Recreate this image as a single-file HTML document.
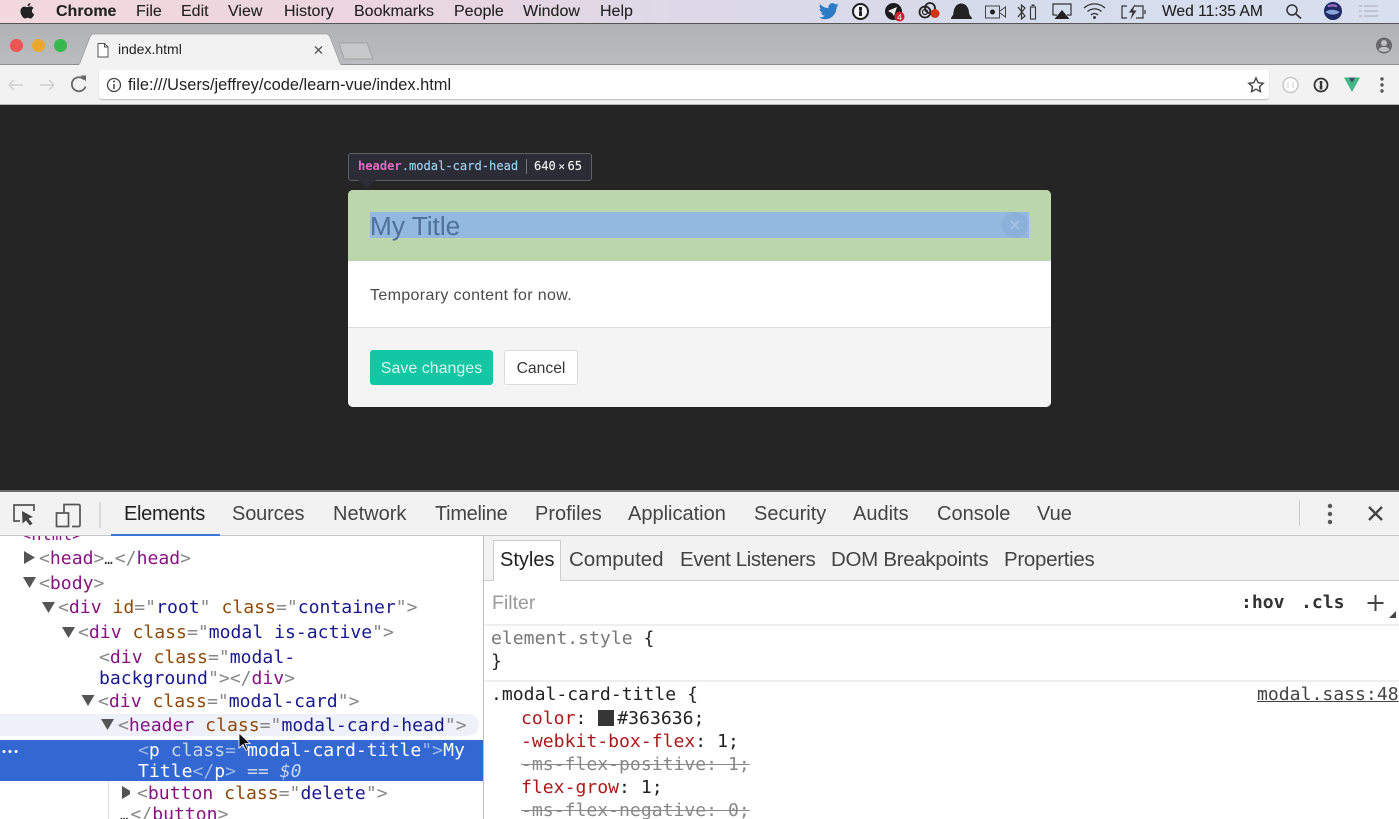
<!DOCTYPE html>
<html><head><meta charset="utf-8"><style>
html,body{margin:0;padding:0;width:1399px;height:819px;overflow:hidden;background:#fff}
body{position:relative;font-family:"Liberation Sans",sans-serif}
.a{position:absolute}
.t{position:absolute;white-space:pre;line-height:1}
.m{font-family:"DejaVu Sans Mono",monospace;font-size:18.1px;color:#881280}
.mi{position:absolute;top:3px;font-size:16px;color:#222;white-space:pre;line-height:18px;-webkit-text-stroke:.1px #222}
.tab{position:absolute;top:504px;font-size:20px;color:#444;line-height:20px;white-space:pre}
.st{position:absolute;top:550px;font-size:20.500px;color:#444;line-height:20px;white-space:pre}
.b{color:#18188f}.o{color:#8f4a08}.g{color:#888}
i{font-style:normal}
.e{display:inline-block;width:10.400px;color:#333;font-size:14px;letter-spacing:-1px}
.k{color:#ab1a1a}.s{color:#888;text-decoration:line-through}.c{color:#222}
</style></head><body>

<!-- menu bar -->
<div class="a" style="left:0;top:0;width:1399px;height:23px;background:linear-gradient(90deg,#f3d9de 0,#ecd5de 25%,#dcd8e8 50%,#d5dcec 75%,#d8dfee 100%)"></div>
<div class="a" style="left:0;top:23px;width:1399px;height:1px;background:#555"></div>
<svg class="a" style="left:18px;top:2px" width="18" height="19" viewBox="0 0 18 19"><path d="M12.5 1c.1 1.5-1.3 3.2-3 3.1C9.300 2.600 11 1.100 12.500 1zM9.300 5.200c.8 0 1.800-.8 3.200-.8 1.100 0 2.400.6 3.100 1.700-2.600 1.500-2.100 5 .6 6.100-.7 1.800-2.200 4.300-3.700 4.300-1 0-1.500-.7-2.800-.7s-1.900.7-2.800.7c-1.900 0-4.400-4-4.400-7.200 0-3 1.900-4.700 3.800-4.700 1.300 0 2.200.6 3 .6z" fill="#222"/></svg>
<div class="mi" style="left:56px;font-weight:bold;font-size:16px">Chrome</div>
<div class="mi" style="left:136px">File</div>
<div class="mi" style="left:181px">Edit</div>
<div class="mi" style="left:228px">View</div>
<div class="mi" style="left:284px">History</div>
<div class="mi" style="left:354px">Bookmarks</div>
<div class="mi" style="left:454px">People</div>
<div class="mi" style="left:523px">Window</div>
<div class="mi" style="left:600px">Help</div>

<!-- status icons -->
<svg class="a" style="left:816px;top:0" width="583" height="23" viewBox="816 0 583 23">
<path transform="translate(0 -2)" d="M819 5c3 3.500 6 5 9.500 5.200-.6-3 2-5.500 4.500-5 1.100 0 2 .5 2.700 1.200 1-.2 1.800-.5 2.500-1-.3 1-1 1.800-1.800 2.300.8-.1 1.600-.3 2.200-.6-.5.800-1.200 1.500-2 2.100 0 5.800-4.500 12-11.500 12-2.300 0-4.400-.7-6.200-1.800 2.200.2 4.300-.4 6-1.700-1.800 0-3.300-1.200-3.800-2.800.6.100 1.200.1 1.800-.1-1.900-.4-3.300-2.100-3.300-4 .6.300 1.200.5 1.800.5-1.800-1.300-2.300-3.700-1.200-5.600z" fill="#2a7dc4"/>
<circle cx="860.500" cy="11.500" r="7.500" fill="#f4f4f6" stroke="#222" stroke-width="2"/><path d="M859 7h3v3l-.5 1 .5 1v4h-3v-4l.5-1-.5-1z" fill="#222"/>
<circle cx="893.500" cy="11.500" r="8.500" fill="#1b1b1f"/><path d="M888 11l9-4-3 9-2-3z" fill="#eee"/><circle cx="899.500" cy="16.500" r="5" fill="#d02030"/><text x="897.200" y="20" font-size="8.500" fill="#fff" font-family="Liberation Sans">4</text>
<circle cx="925" cy="12" r="5.500" fill="none" stroke="#222" stroke-width="1.800"/><circle cx="930" cy="8" r="5" fill="none" stroke="#222" stroke-width="1.800"/><circle cx="925" cy="12" r="2.500" fill="none" stroke="#222" stroke-width="1.200"/><circle cx="935" cy="13.500" r="4.500" fill="#d8330f"/>
<path d="M951 19c0-2.500 2-3 2.300-5 .5-3 .3-4.500 2-7 1.500-2.500 3.700-3.500 6-3.500s4.500 1 6 3.500c1.700 2.500 1.500 4 2 7 .3 2 2.700 2.500 2.700 5z" fill="#222"/>
<path d="M985.500 6h14v12h-14z" fill="none" stroke="#444" stroke-width="1"/><path d="M1000 11l5.500-4v10l-5.500-4" fill="none" stroke="#444" stroke-width="1"/><circle cx="992.500" cy="12" r="2.500" fill="#222"/>
<path d="M1018 7l7 9-3.500 3v-14l3.500 3-7 9" fill="none" stroke="#333" stroke-width="1.200"/><rect x="1030.500" y="7" width="5" height="12" fill="none" stroke="#333" stroke-width="1.100"/><rect x="1031.500" y="4.500" width="3" height="1.500" fill="#333"/>
<path d="M1057 15h-4V4h18v11h-4" fill="none" stroke="#333" stroke-width="1.200"/><path d="M1062 10l7.500 9h-15z" fill="#222"/>
<path d="M1084 8c6-5.500 15-5.500 21 0M1087.500 11.500c4-3.500 10-3.500 14 0M1091 15c2-2 5-2 7 0" fill="none" stroke="#333" stroke-width="1.300"/><circle cx="1094.500" cy="17.500" r="1.400" fill="#222"/>
<path d="M1127 6h-5v12h5M1134 6h9v12h-7M1145 10v4" fill="none" stroke="#333" stroke-width="1.200"/><path d="M1135 4l-6 8.500h3.500l-2 7 6-9h-3.500z" fill="#333"/>
<circle cx="1292" cy="10" r="5" fill="none" stroke="#333" stroke-width="1.500"/><path d="M1296 14l5 4.500" stroke="#333" stroke-width="1.800"/>
<circle cx="1333" cy="11" r="9" fill="#1d2a63"/><path d="M1325.500 12c3-3 10-3 14 0-3 3.500-10 3.500-14 0z" fill="#8aa6d8"/><path d="M1328 6.500c2-1.500 6-1.500 9 0" stroke="#a06dc0" stroke-width="2.200" fill="none"/>
<path d="M1359 6h3M1364 6h14M1359 11h3M1364 11h14M1359 16h3M1364 16h14" stroke="#b8bcc9" stroke-width="1.600"/>
</svg>
<div class="mi" style="left:1162px;color:#222;font-size:15.600px">Wed 11:35 AM</div>

<!-- tab strip -->
<div class="a" style="left:0;top:24px;width:1399px;height:41px;background:linear-gradient(#b1b2b4,#bbbcbf)"></div>
<div class="a" style="left:0;top:64px;width:1399px;height:1px;background:#8f8f91"></div>
<div class="a" style="left:10px;top:39px;width:13px;height:13px;border-radius:50%;background:#ee5552"></div>
<div class="a" style="left:32px;top:39px;width:13px;height:13px;border-radius:50%;background:#eaa92c"></div>
<div class="a" style="left:54px;top:39px;width:13px;height:13px;border-radius:50%;background:#35b84c"></div>
<svg class="a" style="left:70px;top:30px" width="320" height="36" viewBox="70 30 320 36">
<path d="M76 66c2 0 3-1 4-3L90 37c1-2 2-3 4-3h232c2 0 3 1 4 3l10 26c1 2 2 3 4 3z" fill="#f2f2f3" stroke="#a0a0a2" stroke-width=".8"/>
<path d="M339 43h28l6 16h-29z" fill="#c6c7c9" stroke="#a2a2a4" stroke-width="1"/>
<path d="M98 43.500h6.500l3.500 3.500v10H98z M104.500 43.500V47h3.500" fill="#fff" stroke="#555" stroke-width="1"/>
<path d="M315 46.500l7 7M322 46.500l-7 7" stroke="#555" stroke-width="1.300"/>
</svg>
<div class="a" style="left:118px;top:41px;font-size:14px;color:#222;line-height:16px">index.html</div>
<svg class="a" style="left:1373px;top:35px" width="22" height="22" viewBox="0 0 22 22"><circle cx="11" cy="10.500" r="8" fill="#68686b"/><circle cx="11" cy="8" r="3" fill="#c0c1c3"/><path d="M5.500 15c1-2.500 3-3 5.500-3s4.500.5 5.500 3c-3 2.500-8 2.500-11 0z" fill="#c0c1c3"/></svg>

<!-- toolbar -->
<div class="a" style="left:0;top:65px;width:1399px;height:40px;background:#f2f2f2"></div>
<div class="a" style="left:0;top:104px;width:1399px;height:1px;background:#b4b4b4"></div>
<div class="a" style="left:99px;top:70px;width:1170px;height:29px;background:#fff;border-radius:3px;box-shadow:0 1px 1px #bbb"></div>
<svg class="a" style="left:0;top:65px" width="130" height="40" viewBox="0 0 130 40">
<path d="M9 20h14M9 20l5-5M9 20l5 5M40 20h14M54 20l-5-5M54 20l-5 5" fill="none" stroke="#cfcfcf" stroke-width="1.500"/>
<path d="M84 14.500a7 7 0 1 0 1.500 7" fill="none" stroke="#666" stroke-width="1.800"/><path d="M80.500 10.500h5.500v6z" fill="#666"/>
<circle cx="114" cy="20" r="6.500" fill="none" stroke="#444" stroke-width="1.300"/><path d="M114 19v5" stroke="#444" stroke-width="1.500"/><circle cx="114" cy="16.500" r="1" fill="#444"/>
</svg>
<div class="a" style="left:128px;top:77px;font-size:16.400px;color:#222;line-height:17px;white-space:pre">file:///Users/jeffrey/code/learn-vue/index.html</div>
<svg class="a" style="left:1240px;top:70px" width="159" height="30" viewBox="1240 70 159 30">
<path d="M1256 78l2.200 4.700 5 .6-3.700 3.400 1 5-4.500-2.500-4.500 2.500 1-5-3.700-3.400 5-.6z" fill="none" stroke="#444" stroke-width="1.400"/>
<circle cx="1290.500" cy="85" r="7.500" fill="#fff" stroke="#c8c8c8" stroke-width="1.500"/><path d="M1288 82v6M1293 82v6" stroke="#ccc" stroke-width="1"/>
<circle cx="1321" cy="85" r="6.500" fill="#eee" stroke="#333" stroke-width="1.800"/><path d="M1319.700 81h2.600v2.500l-.4 1 .4 1v4h-2.600v-4l.4-1-.4-1z" fill="#333"/>
<path d="M1344 77.500h5l3 5.500 3-5.500h5l-8 14.500z" fill="#41b883"/><path d="M1349 77.500h2.500l.5 1 .5-1h2.500l-3 5.500z" fill="#35495e"/>
<circle cx="1382" cy="79" r="1.700" fill="#555"/><circle cx="1382" cy="85" r="1.700" fill="#555"/><circle cx="1382" cy="91" r="1.700" fill="#555"/>
</svg>

<!-- page -->
<div class="a" style="left:0;top:105px;width:1399px;height:386px;background:#252525"></div>
<!-- modal -->
<div class="a" style="left:348px;top:190px;width:703px;height:217px;border-radius:5px;overflow:hidden;background:#fff">
 <div class="a" style="left:0;top:0;width:703px;height:71px;background:#bbd6aa"></div>
 <div class="a" style="left:22px;top:22px;width:659px;height:26px;background:#93b9e0"></div>
 <div class="a" style="left:654px;top:22px;width:26px;height:26px;border-radius:50%;background:#8bb0da"></div>
 <svg class="a" style="left:654px;top:22px" width="26" height="26"><path d="M9 9l8 8M17 9l-8 8" stroke="#a3c2e4" stroke-width="2"/></svg>
 <div class="a" style="left:22px;top:20px;font-size:26.200px;line-height:32px;color:#4f719c;white-space:pre">My Title</div>
 <div class="a" style="left:0;top:71px;width:703px;height:66px;background:#fff"></div>
 <div class="a" style="left:22px;top:97px;font-size:16px;line-height:17px;color:#4a4a4a;letter-spacing:.35px;white-space:pre">Temporary content for now.</div>
 <div class="a" style="left:0;top:137px;width:703px;height:80px;background:#f4f4f4;border-top:1px solid #dbdbdb;box-sizing:border-box"></div>
 <div class="a" style="left:22px;top:160px;width:123px;height:35px;background:#13c7a4;border-radius:3px;color:#d8f6ef;font-size:16px;line-height:37px;text-align:center">Save changes</div>
 <div class="a" style="left:156px;top:160px;width:74px;height:35px;box-sizing:border-box;background:#fff;border:1px solid #dbdbdb;border-radius:3px;color:#363636;font-size:15.700px;line-height:35px;text-align:center">Cancel</div>
</div>
<!-- tooltip -->
<div class="a" style="left:348px;top:153px;width:244px;height:28px;box-sizing:border-box;background:#2b2c36;border:1px solid #5d5e66;border-radius:3px"></div>
<svg class="a" style="left:358px;top:180px" width="20" height="10"><path d="M0 0h18l-9 8z" fill="#2b2c36"/></svg>
<div class="a" style="left:358px;top:158px;font-family:'DejaVu Sans Mono',monospace;font-size:12.100px;line-height:16px;color:#9ed0f0;white-space:pre;-webkit-text-stroke:.15px #9ed0f0"><span style="color:#e66ac6;font-weight:bold;-webkit-text-stroke:0">header</span>.modal-card-head</div>
<div class="a" style="left:526px;top:159px;width:1px;height:15px;background:#777"></div>
<div class="a" style="left:534px;top:158px;font-family:'DejaVu Sans Mono',monospace;font-size:12.100px;line-height:16px;color:#eee;white-space:pre;-webkit-text-stroke:.15px #eee">640<span style="font-size:11px;margin:0 2.500px 0 2.500px">×</span>65</div>

<!-- devtools -->
<div class="a" style="left:0;top:490px;width:1399px;height:2px;background:#6a6a6a"></div>
<div class="a" style="left:0;top:492px;width:1399px;height:44px;background:#f2f2f2;border-bottom:1px solid #c6c6c6;box-sizing:border-box"></div>
<svg class="a" style="left:0;top:492px" width="110" height="44" viewBox="0 0 110 44">
<path d="M20 29h-6V13h20v6" fill="none" stroke="#555" stroke-width="1.700"/><path d="M22 19l11 6-4.500 1.500 4 5-2.500 2-4-5-3.500 3z" fill="#444"/>
<path d="M64 21V12.500h14.500c1 0 1.500.5 1.500 1.500v19c0 .8-.5 1.500-1.500 1.500H72" fill="none" stroke="#555" stroke-width="1.700"/><rect x="56.500" y="21" width="12" height="13.500" fill="none" stroke="#555" stroke-width="1.700"/>
<path d="M100 10v26" stroke="#ccc" stroke-width="1.200"/>
</svg>
<div class="a" style="left:111px;top:534px;width:109px;height:2px;background:#3c78d8"></div>
<div class="tab" style="left:124px;color:#222;letter-spacing:-.3px">Elements</div>
<div class="tab" style="left:232px;letter-spacing:-.15px">Sources</div>
<div class="tab" style="left:333px">Network</div>
<div class="tab" style="left:435px;letter-spacing:-.3px">Timeline</div>
<div class="tab" style="left:535px">Profiles</div>
<div class="tab" style="left:628px">Application</div>
<div class="tab" style="left:754px">Security</div>
<div class="tab" style="left:853px">Audits</div>
<div class="tab" style="left:937px">Console</div>
<div class="tab" style="left:1037px">Vue</div>
<svg class="a" style="left:1290px;top:492px" width="109" height="44" viewBox="1290 492 109 44">
<path d="M1299.500 500v26" stroke="#ccc" stroke-width="1"/>
<circle cx="1330" cy="506" r="2.200" fill="#555"/><circle cx="1330" cy="514" r="2.200" fill="#555"/><circle cx="1330" cy="522" r="2.200" fill="#555"/>
<path d="M1369 507l13 13M1382 507l-13 13" stroke="#444" stroke-width="2.400"/>
</svg>

<!-- DOM tree -->
<div class="a" style="left:0;top:536px;width:483px;height:283px;background:#fff;overflow:hidden">
 <div class="t m" style="left:21px;top:-9px;font-size:17px">&lt;html&gt;</div>
</div>
<div class="a" style="left:0;top:714px;width:479px;height:22px;background:#eef1f9;border-radius:0 11px 11px 0"></div>
<div class="a" style="left:0;top:740px;width:483px;height:41px;background:#3367d1"></div>
<div class="a" style="left:108px;top:781px;width:1px;height:38px;background:#e2e2e2"></div>

<svg class="a" style="left:0;top:536px" width="130" height="283" viewBox="0 536 130 283">
<g fill="#555">
<path d="M24 551l11 6.500-11 6.500z"/><path d="M23 577h13l-6.500 11z"/>
<path d="M42 602h13l-6.500 11z"/><path d="M62 627h13l-6.500 11z"/>
<path d="M81.500 695h13l-6.500 11z"/><path d="M101 719h13l-6.500 11z"/>
<path d="M122 786l11 6.500-11 6.500z"/>
</g></svg>

<div class="t m" style="left:39px;top:550px"><i class="g">&lt;</i>head<i class="g">&gt;</i><span class="e">…</span><i class="g">&lt;/</i>head<i class="g">&gt;</i></div>
<div class="t m" style="left:39px;top:575px"><i class="g">&lt;</i>body<i class="g">&gt;</i></div>
<div class="t m" style="left:58px;top:599px"><i class="g">&lt;</i>div <i class="o">id</i><i class="g">="</i><i class="b">root</i><i class="g">"</i> <i class="o">class</i><i class="g">="</i><i class="b">container</i><i class="g">"&gt;</i></div>
<div class="t m" style="left:78px;top:624px"><i class="g">&lt;</i>div <i class="o">class</i><i class="g">="</i><i class="b">modal is-active</i><i class="g">"&gt;</i></div>
<div class="t m" style="left:99px;top:649px"><i class="g">&lt;</i>div <i class="o">class</i><i class="g">="</i><i class="b">modal-</i></div>
<div class="t m" style="left:99px;top:670px"><i class="b">background</i><i class="g">"&gt;&lt;/</i>div<i class="g">&gt;</i></div>
<div class="t m" style="left:98px;top:693px"><i class="g">&lt;</i>div <i class="o">class</i><i class="g">="</i><i class="b">modal-card</i><i class="g">"&gt;</i></div>
<div class="t m" style="left:118px;top:717px"><i class="g">&lt;</i>header <i class="o">class</i><i class="g">="</i><i class="b">modal-card-head</i><i class="g">"&gt;</i></div>
<div class="t m" style="left:138px;top:742px;color:#fff"><i style="color:#9db8ea">&lt;</i>p <i style="color:#c8d6f2">class</i><i style="color:#9db8ea">="</i>modal-card-title<i style="color:#9db8ea">"&gt;</i>My</div>
<div class="t m" style="left:138px;top:763px;color:#fff">Title<i style="color:#9db8ea">&lt;/</i>p<i style="color:#9db8ea">&gt;</i> <i style="color:#c8d6f2">==</i> <i style="color:#c8d6f2;font-style:italic">$0</i></div>
<div class="t m" style="left:137px;top:785px"><i class="g">&lt;</i>button <i class="o">class</i><i class="g">="</i><i class="b">delete</i><i class="g">"&gt;</i></div>
<div class="t m" style="left:120px;top:806px"><span class="e">…</span><i class="g">&lt;/</i>button<i class="g">&gt;</i></div>
<div class="a" style="left:1px;top:750px;width:17px;height:3px;background:radial-gradient(circle,#fff 1.400px,transparent 1.600px) 0 0/6px 3px repeat-x"></div>
<svg class="a" style="left:238px;top:732px" width="14" height="20"><path d="M1 1v15l4-3.500 3 6 2-1-3-6h5z" fill="#111" stroke="#fff" stroke-width=".8"/></svg>

<!-- styles pane -->
<div class="a" style="left:483px;top:536px;width:1px;height:283px;background:#bdbdbd"></div>
<div class="a" style="left:484px;top:536px;width:915px;height:45px;background:#f2f2f2;border-bottom:1px solid #cfcfcf;box-sizing:border-box"></div>
<div class="a" style="left:493px;top:540px;width:68px;height:41px;background:#fff;border:1px solid #ccc;border-bottom:none;box-sizing:border-box"></div>
<div class="st" style="left:500px;color:#222;font-size:20px">Styles</div>
<div class="st" style="left:569px">Computed</div>
<div class="st" style="left:680px;letter-spacing:-.4px">Event Listeners</div>
<div class="st" style="left:831px;letter-spacing:-.3px">DOM Breakpoints</div>
<div class="st" style="left:1004px;letter-spacing:-.3px">Properties</div>
<div class="a" style="left:492px;top:593px;font-size:19.500px;line-height:20px;color:#9a9a9a">Filter</div>
<div class="t m" style="left:1241px;top:594px;color:#333;font-weight:bold">:hov</div>
<div class="t m" style="left:1301px;top:594px;color:#333;font-weight:bold">.cls</div>
<svg class="a" style="left:1360px;top:590px" width="39" height="30"><path d="M15.500 5v16M7.500 13h16" stroke="#444" stroke-width="2"/><path d="M29 28l7-7v7z" fill="#444"/></svg>
<div class="a" style="left:484px;top:624px;width:915px;height:2px;background:#eee"></div>
<div class="t m" style="left:491px;top:630px;color:#777">element.style <i class="c">{</i></div>
<div class="t m" style="left:491px;top:653px;color:#222">}</div>
<div class="a" style="left:484px;top:680px;width:915px;height:2px;background:#eee"></div>
<div class="t m" style="left:491px;top:686px;color:#222">.modal-card-title {</div>
<div class="t m" style="left:1257px;top:686px;color:#444;text-decoration:underline">modal.sass:48</div>
<div class="t m" style="left:521px;top:710px;color:#222"><i class="k">color</i>: <span style="display:inline-block;width:16px;height:16px;background:#363636;vertical-align:-2px;margin:0 3px 0 1px"></span>#363636;</div>
<div class="t m" style="left:521px;top:733px;color:#222"><i class="k">-webkit-box-flex</i>: 1;</div>
<div class="t m s" style="left:521px;top:756px">-ms-flex-positive: 1;</div>
<div class="t m" style="left:521px;top:779px;color:#222"><i class="k">flex-grow</i>: 1;</div>
<div class="t m s" style="left:521px;top:802px">-ms-flex-negative: 0;</div>
</body></html>
